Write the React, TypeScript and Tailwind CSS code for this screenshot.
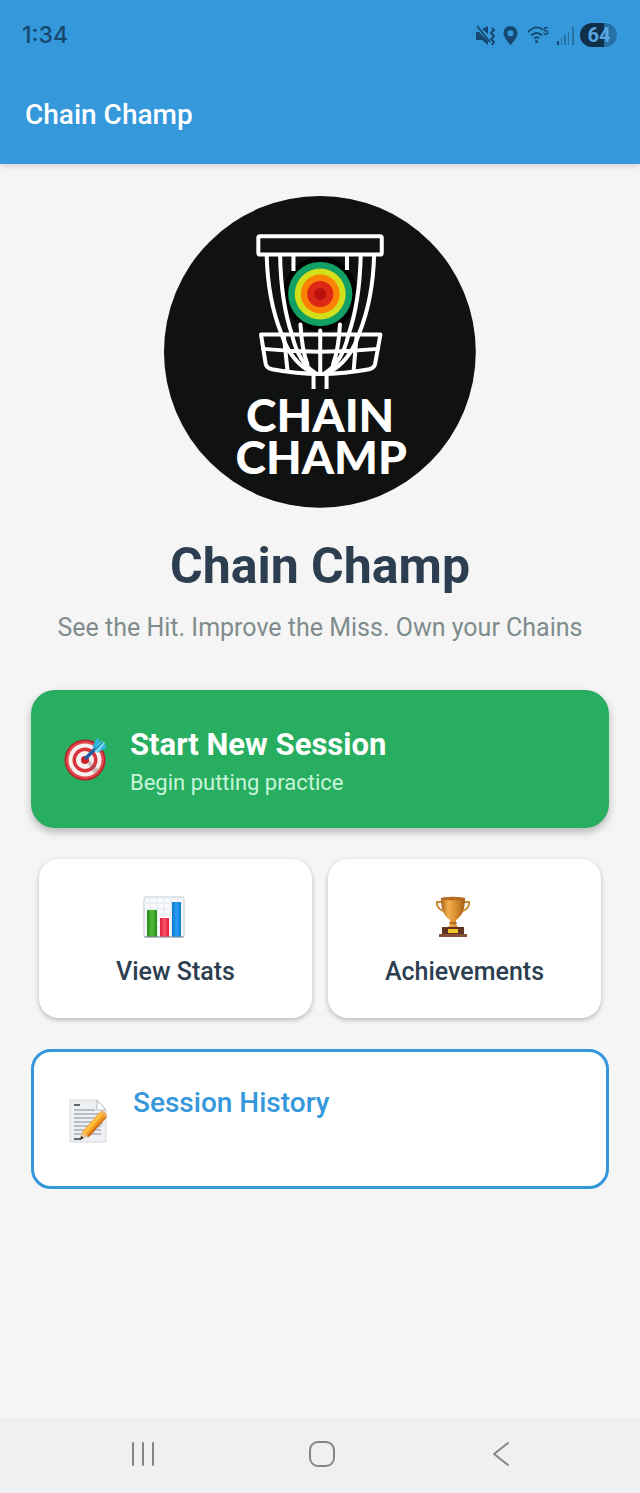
function Logo() {
  return (
    <svg viewBox="0 0 933 933" className="w-[54%] mx-auto block" role="img" aria-label="Chain Champ logo">
      <circle cx="466" cy="466" r="466" fill="#101211" />
      <g transform="translate(165 72)" fill="none" stroke="#fff" strokeWidth="12" strokeLinecap="round" strokeLinejoin="round">
        <circle cx="302" cy="221" r="112" fill="#000" stroke="none" />
        <rect x="117" y="48" width="369" height="55" rx="5" />
        {/* chains */}
        <path d="M142 106C144 190 158 270 186 340C200 382 226 430 278 456" />
        <path d="M182 106C184 200 196 280 218 344C230 396 250 434 286 456" />
        <path d="M463 106C461 190 446 270 418 340C404 382 378 430 326 456" />
        <path d="M423 106C421 200 408 280 386 344C374 396 354 434 318 456" />
        <path d="M222 106V152M382 106V149" strokeLinecap="butt" />
        <path d="M243 312C245 350 250 395 264 432M361 312C359 350 354 395 340 432M302 330V458" />
        {/* basket */}
        <path d="M125 342H482L466 430Q463 442 448 446Q302 474 158 446Q142 442 139 430Z" />
        <path d="M132 385Q302 402 474 385M193 344L204 448M411 344L402 448" />
        <path d="M282 458V505M321 458V505" strokeLinecap="butt" />
        <g stroke="none">
          <circle cx="302" cy="221" r="96" fill="#13a065" />
          <circle cx="302" cy="221" r="76" fill="#d3df1b" />
          <circle cx="302" cy="221" r="58" fill="#fb8205" />
          <circle cx="302" cy="221" r="39" fill="#dc2814" />
          <circle cx="302" cy="221" r="18" fill="#bc120d" />
        </g>
      </g>
      <g fill="#fff" textAnchor="middle" className="font-['Lato',sans-serif] font-black text-[138px]">
        <text x="467" y="704">CHAIN</text>
        <text x="470" y="830">CHAMP</text>
      </g>
    </svg>
  );
}

function StatusIcons() {
  return (
    <svg width="144" height="28" viewBox="0 0 144 28" fill="#16486f" aria-hidden="true">
      {/* muted */}
      <path d="M1 11h3l9 9v4l-6-5H1zM7 8l6-3v8z" />
      <path d="M2 5l13 16" stroke="#16486f" strokeWidth="1.800" />
      <path d="M17 7l2 2-3 3 3 3-3 3 3 3-2 3" fill="none" stroke="#16486f" strokeWidth="2" strokeLinejoin="round" />
      {/* location */}
      <path fillRule="evenodd" d="M35.500 5a7 7 0 0 0-7 7c0 5 7 12 7 12s7-7 7-12a7 7 0 0 0-7-7zm0 4.200a3 3 0 1 1 0 6 3 3 0 0 1 0-6z" />
      {/* wifi */}
      <g fill="none" stroke="#16486f" strokeWidth="1.800">
        <path d="M53 11q8.500-8 15-2M56 14.500q6-5 11 0M59 17.500q2.500-2.500 5 0" />
      </g>
      <circle cx="61.500" cy="20.500" r="1.500" />
      <text x="68" y="14" className="font-['Roboto',sans-serif] font-bold text-[10px]">5</text>
      {/* signal */}
      <path d="M82 20h2v4h-2z" />
      <path d="M86 17h1v7h-1zM89 14h2v10h-2zM93 11h1v13h-1zM97 6h2v18h-2z" opacity=".5" />
      {/* battery */}
      <path d="M117 2h12v24h-12a12 12 0 0 1 0-24z" fill="#102f49" />
      <path d="M129 2h1a12 12 0 0 1 0 24h-1z" fill="#2670a8" />
      <text x="124" y="21" textAnchor="middle" fill="#58a6e0" className="font-['Roboto',sans-serif] font-bold text-[20px]">64</text>
    </svg>
  );
}

function TargetIcon() {
  return (
    <svg width="44" height="44" viewBox="0 0 44 44" className="shrink-0" aria-hidden="true">
      <circle cx="21" cy="23" r="20.500" fill="#b91f27" />
      <circle cx="21" cy="23" r="19" fill="#e0484d" />
      <circle cx="21" cy="23" r="16.500" fill="#f6f1ee" />
      <circle cx="21" cy="23" r="12.500" fill="#d9343d" />
      <circle cx="21" cy="23" r="9" fill="#f6f1ee" />
      <circle cx="21" cy="23" r="4" fill="#c9202b" />
      <path d="M23 25l7 12 5-4-10-10z" fill="#7f5560" opacity=".35" />
      <path d="M21 22L34 9" stroke="#245ea1" strokeWidth="3.500" />
      <path d="M28 10l5-9 3 2-1 8zM33 16l3-6 6-3v4z" fill="#31b6df" />
      <path d="M30 13l8-9 3 2-8 10z" fill="#8ce3f2" />
      <path d="M30 14l9-9" stroke="#1686bd" strokeWidth="1.500" />
    </svg>
  );
}

function ChartIcon() {
  return (
    <svg width="42" height="42" viewBox="0 0 42 42" aria-hidden="true">
      <defs>
        <linearGradient id="green"><stop stopColor="#238c18" /><stop offset=".5" stopColor="#58b937" /><stop offset="1" stopColor="#238c18" /></linearGradient>
        <linearGradient id="red"><stop stopColor="#dc1f3c" /><stop offset=".5" stopColor="#fb5361" /><stop offset="1" stopColor="#d91d3a" /></linearGradient>
        <linearGradient id="blue"><stop stopColor="#0876c8" /><stop offset=".5" stopColor="#269ff2" /><stop offset="1" stopColor="#0878cc" /></linearGradient>
      </defs>
      <rect x="1" y="1" width="40" height="40" rx="1.500" fill="#f8f9fb" stroke="#c3c8d0" />
      <path d="M1 7h40M1 13h40M1 19h40M1 25h40M1 31h40M7 1v40M14 1v40M21 1v40M28 1v40M35 1v40" stroke="#e3e6eb" />
      <path d="M4 14h10v27H4z" fill="url(#green)" />
      <path d="M17 22h9v19h-9z" fill="url(#red)" />
      <path d="M29 6h9v35h-9z" fill="url(#blue)" />
      <path d="M1 41h40" stroke="#8b919c" />
    </svg>
  );
}

function TrophyIcon() {
  return (
    <svg width="36" height="42" viewBox="0 0 36 42" aria-hidden="true">
      <defs>
        <linearGradient id="gold"><stop stopColor="#a85f18" /><stop offset=".3" stopColor="#f3ae4c" /><stop offset=".65" stopColor="#d48a2b" /><stop offset="1" stopColor="#a65d15" /></linearGradient>
      </defs>
      <path d="M7 6H2q-1 7 9 10M29 6h5q1 7-9 10" fill="none" stroke="#cb862d" strokeWidth="2" strokeLinecap="round" />
      <path d="M6 2h24c0 12-3 18-9 22v3c0 3 2 4 5 6H10c3-2 5-3 5-6v-3C9 20 6 14 6 2z" fill="url(#gold)" />
      <ellipse cx="18" cy="2.500" rx="12" ry="1.800" fill="#b36c20" />
      <path d="M14 27h8" stroke="#7d4212" />
      <path d="M7 31h22v7H7z" fill="#633322" />
      <path d="M4 38h28v3H4z" fill="#895038" />
      <path d="M13 33h10v4H13z" fill="#f0c52c" />
    </svg>
  );
}

function MemoIcon() {
  return (
    <svg width="44" height="44" viewBox="0 0 44 44" className="shrink-0" aria-hidden="true">
      <path d="M3 1h27l9 10v32H3z" fill="#eef0f3" stroke="#d4d7dc" />
      <path d="M30 1v10h9z" fill="#fff" stroke="#b3b8c0" />
      <path d="M7 6h6M7 40h7" stroke="#333b47" strokeWidth="1.500" />
      <path d="M7 11h21M7 15h27M7 19h27M7 23h27M7 27h27M7 31h27M7 35h27" stroke="#858d98" />
      <path d="M15 39l18-19 4 5-16 14z" fill="#c7cbd1" opacity=".6" />
      <path d="M15 33L33 13l6 5-18 20z" fill="#f39a20" />
      <path d="M16 33L34 13l2 2-18 21z" fill="#ffc342" />
      <path d="M20 37l19-20 1 1-18 20z" fill="#cc6b12" />
      <path d="M33 13q2-2 5 0 3 3 1 5z" fill="#edad69" />
      <path d="M15 33l-2 7 8-3z" fill="#edc28f" />
      <path d="M14 37l-1 4 4-2z" fill="#333" />
    </svg>
  );
}

const cards = [
  { icon: ChartIcon, label: "View Stats" },
  { icon: TrophyIcon, label: "Achievements" },
];

export default function App() {
  return (
    <div className="min-h-screen flex flex-col bg-[#f5f5f5] font-['Roboto',sans-serif]">
      <header className="bg-[#3498db] text-white shadow-[0_2px_6px_rgba(0,0,0,0.15)]">
        <div className="h-[70px] pl-[22px] pr-[21px] flex items-center justify-between">
          <span className="font-['Inter',sans-serif] text-[23px] font-medium text-[#16486f]">1:34</span>
          <StatusIcons />
        </div>
        <div className="h-[94px] px-[25px] pb-1 flex items-center">
          <span className="text-[28px] leading-9 font-medium">Chain Champ</span>
        </div>
      </header>

      <main className="flex-1 px-[31px] pt-8 pb-8">
        <Logo />
        <h1 className="mt-7 text-center text-[50px] leading-[60px] font-bold text-[#2c3e50]">Chain Champ</h1>
        <p className="mt-4 text-center text-[25px] leading-8 text-[#7f8c8d] whitespace-nowrap">
          See the Hit. Improve the Miss. Own your Chains
        </p>

        <button className="mt-[46px] w-full h-[138px] px-[33px] flex items-center gap-[22px] text-left rounded-[24px] bg-[#27ae60] text-white shadow-[0_4px_9px_rgba(0,0,0,0.26)]">
          <TargetIcon />
          <span className="pt-2 flex flex-col">
            <span className="text-[31px] leading-10 font-bold">Start New Session</span>
            <span className="text-[22px] leading-9 text-[#c9f5da]">Begin putting practice</span>
          </span>
        </button>

        {/* Secondary actions */}
        <div className="mt-[31px] px-2 grid grid-cols-2 gap-4">
          {cards.map((card) => (
            <button
              key={card.label}
              className="h-[159px] pt-1.5 flex flex-col items-center justify-center gap-[18px] rounded-[20px] bg-white shadow-[0_2px_5px_rgba(0,0,0,0.25)]"
            >
              <span className="pr-6">
                <card.icon />
              </span>
              <span className="text-[25px] leading-8 font-medium text-[#2c3e50]">{card.label}</span>
            </button>
          ))}
        </div>

        <button className="mt-[31px] w-full h-[140px] pt-1 px-[33px] flex items-center gap-[22px] text-left rounded-[20px] border-3 border-[#3498db] bg-white">
          <MemoIcon />
          <span className="pb-9 text-[28px] leading-9 font-medium text-[#3498db]">Session History</span>
        </button>
      </main>

      <nav className="h-[75px] pl-[130px] pr-[126px] pb-1 flex items-center justify-between bg-[#f0f0f2] text-[#858587]">
        <button aria-label="Recent apps">
          <svg width="26" height="26" viewBox="0 0 26 26" fill="none" stroke="currentColor" strokeWidth="2" strokeLinecap="round">
            <path d="M3 2v22M13 2v22M23 2v22" />
          </svg>
        </button>
        <button aria-label="Home">
          <svg width="26" height="26" viewBox="0 0 26 26" fill="none" stroke="currentColor" strokeWidth="2">
            <rect x="1" y="1" width="24" height="24" rx="8" />
          </svg>
        </button>
        <button aria-label="Back">
          <svg width="26" height="26" viewBox="0 0 26 26" fill="none" stroke="currentColor" strokeWidth="2" strokeLinecap="round" strokeLinejoin="round">
            <path d="M20 2L6 13l14 11" />
          </svg>
        </button>
      </nav>
    </div>
  );
}
